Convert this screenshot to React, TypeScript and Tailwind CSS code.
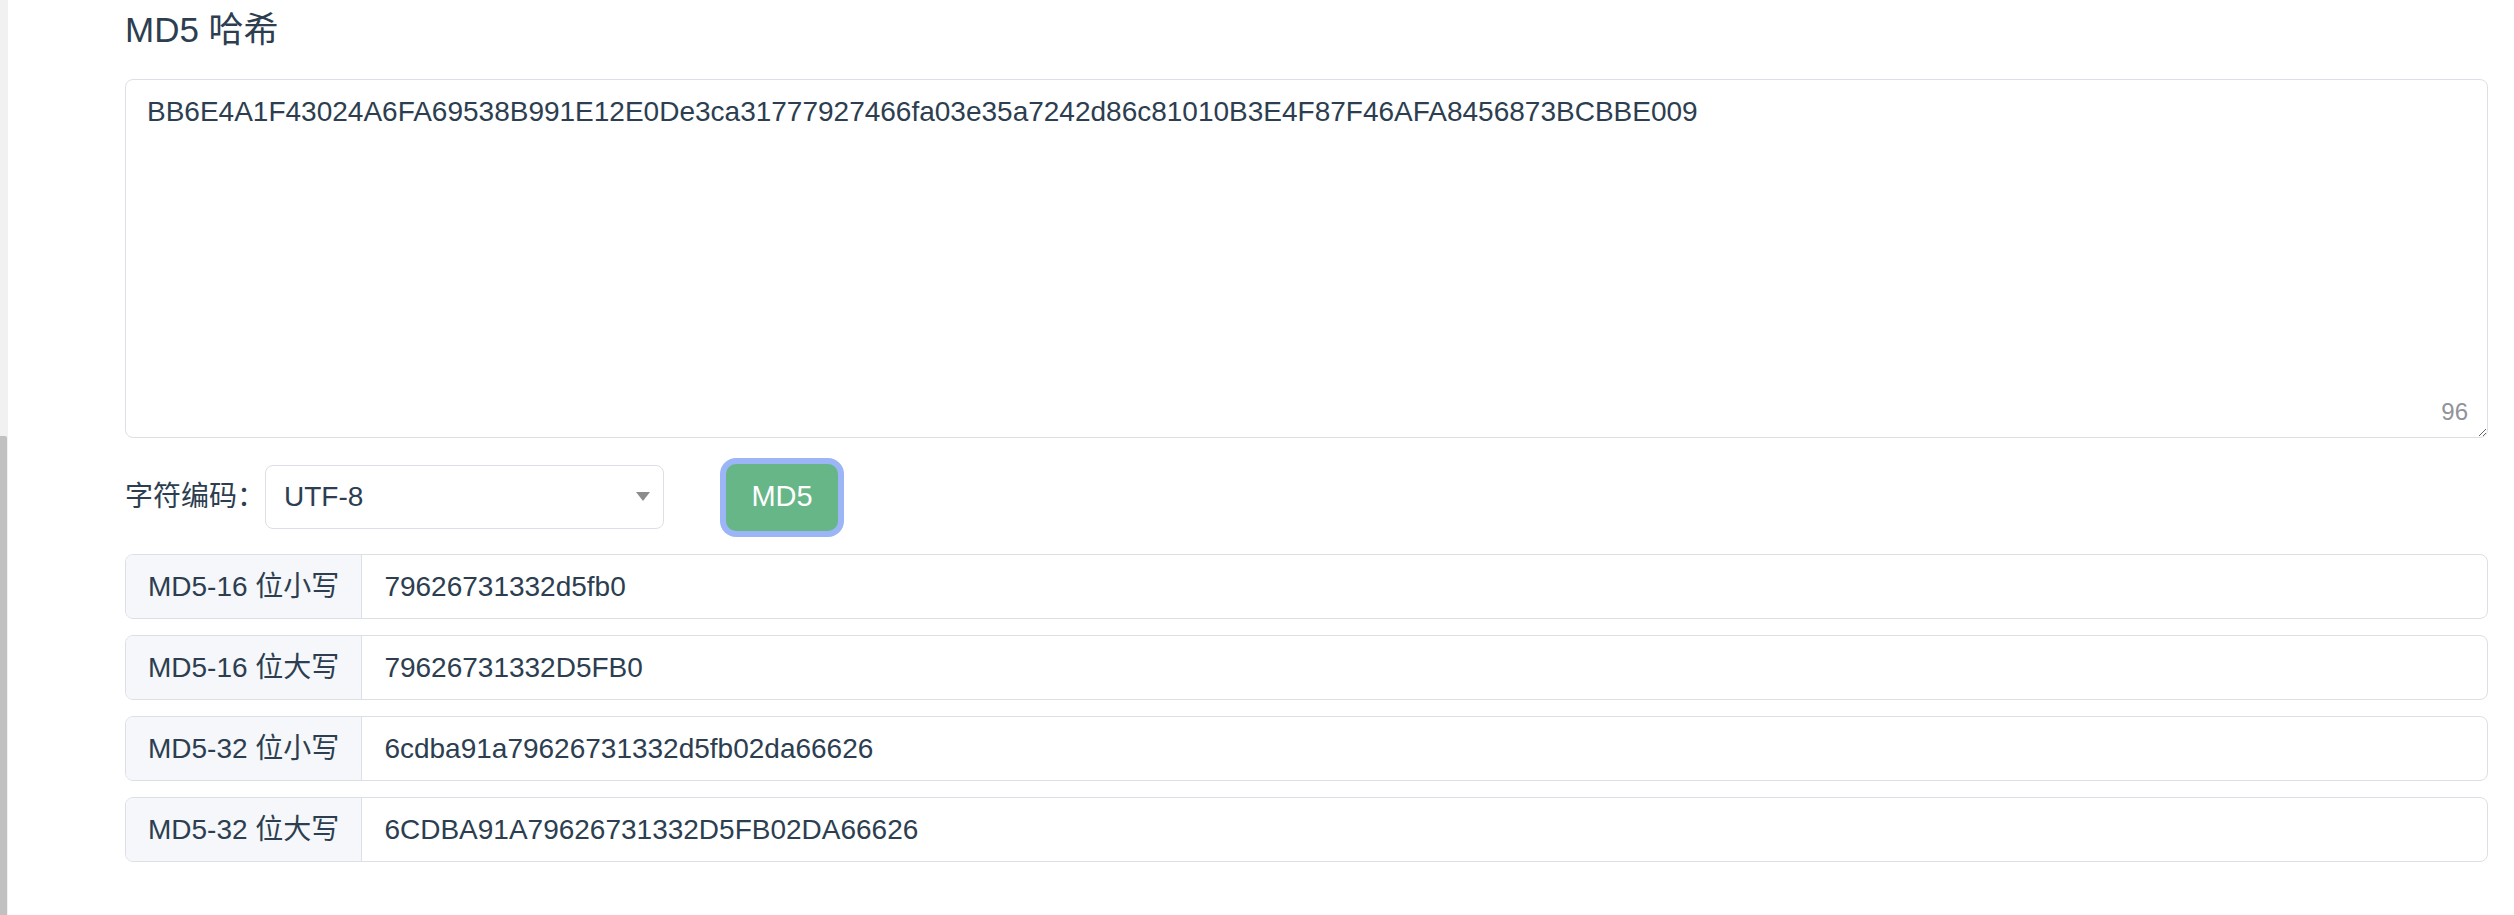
import React from 'react';

const hashInput =
  'BB6E4A1F43024A6FA69538B991E12E0De3ca31777927466fa03e35a7242d86c81010B3E4F87F46AFA8456873BCBBE009';

const results = [
  { label: 'MD5-16 位小写', value: '79626731332d5fb0' },
  { label: 'MD5-16 位大写', value: '79626731332D5FB0' },
  { label: 'MD5-32 位小写', value: '6cdba91a79626731332d5fb02da66626' },
  { label: 'MD5-32 位大写', value: '6CDBA91A79626731332D5FB02DA66626' },
];

function ResultRow({ label, value }: { label: string; value: string }) {
  return (
    <div className="flex h-[65px] overflow-hidden rounded-[8px] border border-[#dcdfe6]">
      <div className="flex items-center border-r border-[#dcdfe6] bg-[#f5f7fa] px-[22px] text-[28px]">
        {label}
      </div>
      <div className="flex flex-1 items-center px-[22px] text-[28px]">{value}</div>
    </div>
  );
}

export default function App() {
  return (
    <div className="flex min-h-[915px] bg-white font-['Liberation_Sans','Noto_Sans_CJK_SC',sans-serif] text-[#2c3e50]">
      {/* scrollbar strip of the sidebar */}
      <div className="flex w-[8px] shrink-0 flex-col bg-[#f1f1f1]">
        <div className="mt-[436px] w-[7px] flex-1 rounded-tr-[2px] bg-[#c1c1c1]" />
      </div>

      <main className="flex-1 pl-[117px] pr-[26px]">
        <h1 className="mb-[24px] pt-[4px] text-[35px] leading-[51px] font-normal">MD5 哈希</h1>

        <div className="relative">
          <textarea
            className="block h-[359px] w-full rounded-[8px] border border-[#dcdfe6] px-[21px] py-[11px] font-['Liberation_Sans','Noto_Sans_CJK_SC',sans-serif] text-[28px] leading-[42px] text-[#2c3e50] outline-none"
            defaultValue={hashInput}
          />
          <span className="absolute bottom-[14px] right-[20px] text-[24px] leading-[24px] text-[#909399]">
            96
          </span>
        </div>

        <div className="mt-[27px] flex h-[64px] items-center">
          <span className="text-[28px]">字符编码：</span>
          <div className="flex h-[64px] w-[399px] items-center justify-between rounded-[8px] border border-[#dcdfe6] pl-[18px] pr-[13px] text-[28px]">
            <span>UTF-8</span>
            <svg width="14" height="10" viewBox="0 0 14 10">
              <path d="M0 0 L14 0 L7 9 Z" fill="#8c8c8c" />
            </svg>
          </div>
          <button className="ml-[62px] h-[67px] w-[112px] rounded-[10px] bg-[#66b687] text-[29px] text-white ring-[6px] ring-[#9bb5f6]">
            MD5
          </button>
        </div>

        <div className="mt-[25px] flex flex-col gap-[16px]">
          {results.map((r) => (
            <ResultRow key={r.label} label={r.label} value={r.value} />
          ))}
        </div>
      </main>
    </div>
  );
}
